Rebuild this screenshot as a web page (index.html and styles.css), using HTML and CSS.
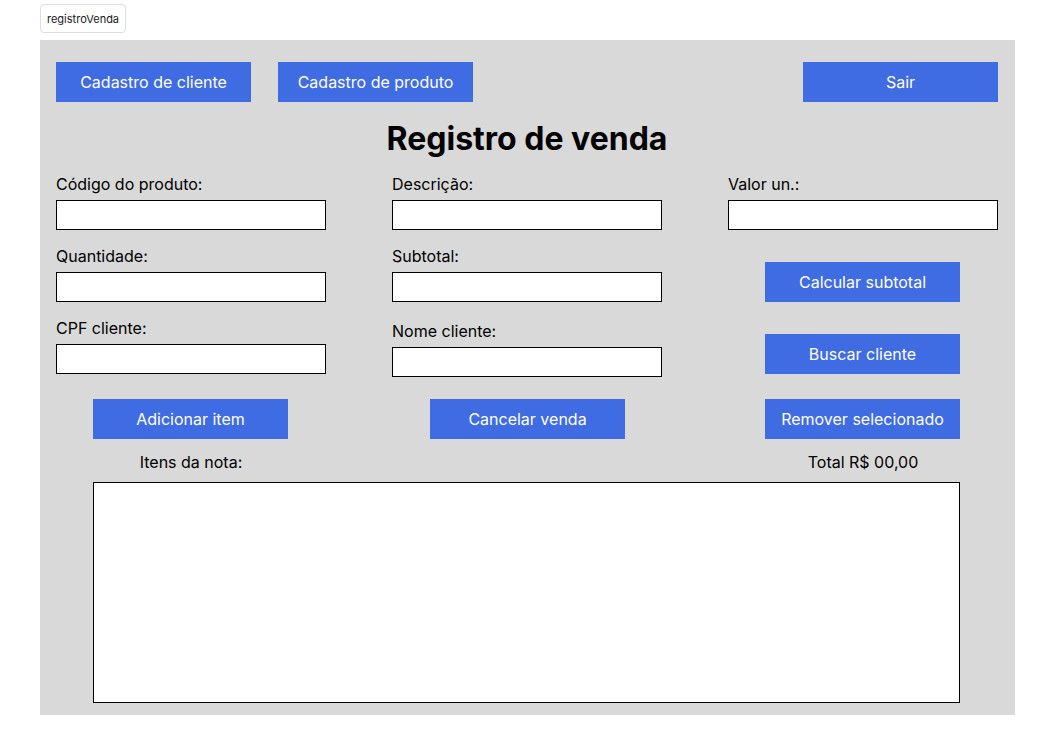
FILE: index.html
```html
<!DOCTYPE html>
<html lang="pt-BR">
<head>
<meta charset="utf-8">
<title>registroVenda</title>
<link rel="stylesheet" href="styles.css">
</head>
<body>
<div class="page">
  <div class="frame-tag">registroVenda</div>
  <main class="panel">
    <nav class="topbar">
      <button class="btn">Cadastro de cliente</button>
      <button class="btn">Cadastro de produto</button>
      <button class="btn btn-right">Sair</button>
    </nav>
    <h1 class="title">Registro de venda</h1>
    <section class="form-grid">
      <div class="field">
        <label class="label">Código do produto:</label>
        <input class="input" type="text">
      </div>
      <div class="field">
        <label class="label">Descrição:</label>
        <input class="input" type="text">
      </div>
      <div class="field">
        <label class="label">Valor un.:</label>
        <input class="input" type="text">
      </div>

      <div class="field">
        <label class="label">Quantidade:</label>
        <input class="input" type="text">
      </div>
      <div class="field">
        <label class="label">Subtotal:</label>
        <input class="input" type="text">
      </div>
      <div class="cell-btn">
        <button class="btn">Calcular subtotal</button>
      </div>

      <div class="field">
        <label class="label">CPF cliente:</label>
        <input class="input" type="text">
      </div>
      <div class="field field-shift">
        <label class="label">Nome cliente:</label>
        <input class="input" type="text">
      </div>
      <div class="cell-btn">
        <button class="btn">Buscar cliente</button>
      </div>
    </section>

    <section class="actions">
      <button class="btn">Adicionar item</button>
      <button class="btn btn-mid">Cancelar venda</button>
      <button class="btn">Remover selecionado</button>
    </section>

    <section class="summary">
      <span class="summary-text">Itens da nota:</span>
      <span></span>
      <span class="summary-text">Total R$ 00,00</span>
    </section>

    <div class="items-box"></div>
  </main>
</div>
</body>
</html>
```

FILE: styles.css
```css
* {
  box-sizing: border-box;
}

html, body {
  margin: 0;
  padding: 0;
  background: #ffffff;
}

body {
  font-family: Inter, "Noto Sans", "Liberation Sans", sans-serif;
  color: #000000;
}

.page {
  padding: 4px 0 0 40px;
}

.frame-tag {
  display: inline-flex;
  align-items: center;
  height: 29px;
  padding: 0 6px;
  border: 1px solid #dedede;
  border-radius: 4px;
  background: #ffffff;
  font-size: 11px;
  color: #1a1a1a;
}

.panel {
  margin-top: 7px;
  width: 975px;
  height: 675px;
  background: #d9d9d9;
  padding: 22px 17px 12px 16px;
}

.btn {
  width: 195px;
  height: 40px;
  border: none;
  border-radius: 0;
  background: #3f6be3;
  color: #ffffff;
  font-family: inherit;
  font-size: 16px;
  padding: 0;
  cursor: pointer;
}

.topbar {
  display: flex;
  gap: 27px;
}

.btn-right {
  margin-left: auto;
}

.title {
  margin: 19px 0 0;
  text-align: center;
  font-size: 32px;
  font-weight: 700;
  line-height: 36px;
}

.form-grid {
  margin-top: 18px;
  display: grid;
  grid-template-columns: repeat(3, 270px);
  grid-auto-rows: 55px;
  column-gap: 66px;
  row-gap: 17px;
}

.field {
  display: flex;
  flex-direction: column;
  align-self: start;
  gap: 6px;
}

.field-shift {
  margin-top: 3px;
}

.label {
  font-size: 16px;
  line-height: 19px;
}

.input {
  flex-shrink: 0;
  width: 270px;
  height: 30px;
  margin: 0;
  border: 1px solid #000000;
  border-radius: 0;
  background: #ffffff;
  font-family: inherit;
  font-size: 14px;
  padding: 0 6px;
}

.cell-btn {
  display: flex;
  justify-content: flex-start;
  align-items: flex-end;
  padding-left: 37px;
}

.actions {
  margin-top: 25px;
  display: grid;
  grid-template-columns: repeat(3, 270px);
  column-gap: 66px;
  justify-items: start;
}

.actions .btn {
  margin-left: 37px;
}

.actions .btn-mid {
  margin-left: 38px;
}

.summary {
  margin-top: 14px;
  display: grid;
  grid-template-columns: repeat(3, 270px);
  column-gap: 66px;
  justify-items: center;
}

.summary-text {
  font-size: 16px;
  line-height: 19px;
}

.items-box {
  margin: 10px 38px 0 37px;
  height: 221px;
  background: #ffffff;
  border: 1px solid #000000;
}
```
